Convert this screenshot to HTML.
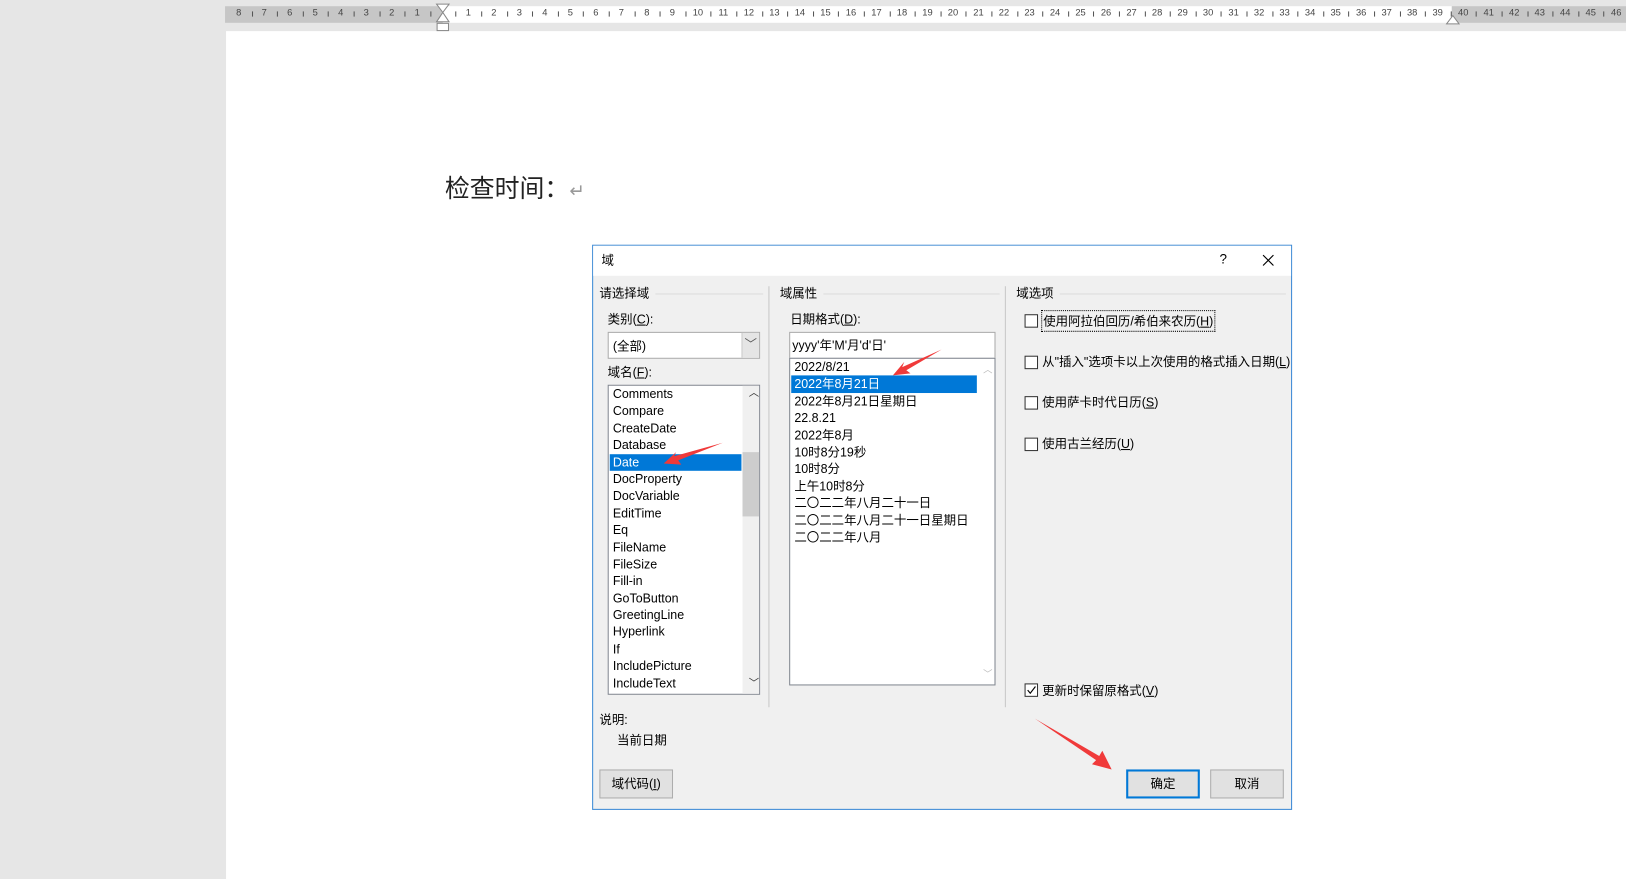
<!DOCTYPE html>
<html><head><meta charset="utf-8"><style>
*{margin:0;padding:0;box-sizing:border-box}
html,body{width:1626px;height:879px;overflow:hidden;background:#e6e6e6}
#w{position:absolute;left:0;top:0;width:1568px;height:848px;transform:scale(1.037);transform-origin:0 0;font-family:"Liberation Sans","Microsoft YaHei","Noto Sans CJK SC",sans-serif;font-size:12px;color:#000}
.a{position:absolute}
.page{left:218px;top:30px;width:1350px;height:818px;background:#fff}
.ruler{top:6px;height:16px;font-size:9px;color:#444}
.lst div{height:16.4px;line-height:16.4px;padding-left:3px;white-space:nowrap}
.sel{background:#0078d7;color:#fff}
.cb{width:13px;height:13px;border:1px solid #333;background:#fff}
.btn{height:28px;border:1px solid #adadad;background:#e1e1e1;text-align:center;line-height:26px}
.hl{height:1px;background:#dcdcdc}
u{text-decoration:underline}
</style></head><body><div id="w">
<div class="a page"></div>
<div class="a ruler" style="left:217px;width:210px;background:#c6c6c6"></div>
<div class="a ruler" style="left:427px;width:973px;background:#fff"></div>
<div class="a ruler" style="left:1400px;width:168px;background:#c6c6c6"></div>
<div id="rn"></div>
<svg class="a" style="left:420px;top:3px" width="14" height="28"><path d="M1 1h12L7 9zM7 9L1 18h12z" fill="#fff" stroke="#888"/><rect x="1.5" y="19.5" width="11" height="7" fill="#fff" stroke="#888"/></svg>
<svg class="a" style="left:1394px;top:12px" width="14" height="12"><path d="M1 11L7 3l6 8z" fill="#fff" stroke="#888"/></svg>
<div class="a" style="left:429px;top:162px;font-size:24px;color:#222;font-family:'Noto Sans CJK SC',sans-serif">检查时间：<span style="color:#999;font-size:18px">↵</span></div>

<div class="a" style="left:571px;top:236px;width:675px;height:545px;border:1px solid #3c8ad6;background:#f0f0f0">
 <div class="a" style="left:0;top:0;width:673px;height:29px;background:#fff"></div>
 <div class="a" style="left:8px;top:5px">域</div>
 <div class="a" style="left:604px;top:5px;font-size:13px">?</div>
 <svg class="a" style="left:645px;top:8px" width="12" height="12"><path d="M1 1L11 11M11 1L1 11" stroke="#000" stroke-width="1.1"/></svg>
 <div class="a" style="left:6px;top:37px">请选择域</div><div class="a hl" style="left:60px;top:46px;width:104px"></div>
 <div class="a" style="left:169px;top:39px;width:1px;height:406px;background:#c8c8c8"></div>
 <div class="a" style="left:180px;top:37px">域属性</div><div class="a hl" style="left:222px;top:46px;width:170px"></div>
 <div class="a" style="left:397px;top:39px;width:1px;height:406px;background:#c8c8c8"></div>
 <div class="a" style="left:408px;top:37px">域选项</div><div class="a hl" style="left:450px;top:46px;width:218px"></div>
 <div class="a" style="left:14px;top:62px">类别(<u>C</u>):</div>
 <div class="a" style="left:14px;top:83px;width:147px;height:26px;border:1px solid #aaa;background:#fff;padding:4px 4px">(全部)</div>
 <div class="a" style="left:143px;top:84px;width:17px;height:24px;background:#e5e5e5;border-left:1px solid #ccc;text-align:center;color:#555;line-height:22px">﹀</div>
 <div class="a" style="left:14px;top:113px">域名(<u>F</u>):</div>
 <div class="a lst" style="left:14px;top:134px;width:147px;height:299px;border:1px solid #828790;background:#fff;padding-top:0;padding-left:1px;font-size:12px">
  <div>Comments</div><div>Compare</div><div>CreateDate</div><div>Database</div><div class="sel" style="width:127px">Date</div><div>DocProperty</div><div>DocVariable</div><div>EditTime</div><div>Eq</div><div>FileName</div><div>FileSize</div><div>Fill-in</div><div>GoToButton</div><div>GreetingLine</div><div>Hyperlink</div><div>If</div><div>IncludePicture</div><div>IncludeText</div>
  <div class="a" style="left:129px;top:0;width:16px;height:297px;background:#f0f0f0"></div>
  <div class="a" style="left:129px;top:64px;width:16px;height:62px;background:#cdcdcd"></div>
  <div class="a" style="left:132px;top:0;font-size:10px;color:#333">︿</div>
  <div class="a" style="left:132px;top:280px;font-size:10px;color:#333">﹀</div>
 </div>
 <div class="a" style="left:190px;top:62px">日期格式(<u>D</u>):</div>
 <div class="a" style="left:189px;top:83px;width:199px;height:26px;border:1px solid #aaa;background:#fff;padding:3px 2px">yyyy'年'M'月'd'日'</div>
 <div class="a lst" style="left:189px;top:108px;width:199px;height:316px;border:1px solid #828790;background:#fff;padding-top:0;padding-left:1px;font-size:12px">
  <div>2022/8/21</div><div class="sel" style="width:179px">2022年8月21日</div><div>2022年8月21日星期日</div><div>22.8.21</div><div>2022年8月</div><div>10时8分19秒</div><div>10时8分</div><div>上午10时8分</div><div>二〇二二年八月二十一日</div><div>二〇二二年八月二十一日星期日</div><div>二〇二二年八月</div>
  <div class="a" style="left:183px;top:2px;font-size:9px;color:#bbb">︿</div>
  <div class="a" style="left:183px;top:296px;font-size:9px;color:#bbb">﹀</div>
 </div>
 <div class="a cb" style="left:416px;top:66px"></div><div class="a" style="left:432px;top:62px;border:1px dotted #000;padding:1px 1px">使用阿拉伯回历/希伯来农历(<u>H</u>)</div>
 <div class="a cb" style="left:416px;top:106px"></div><div class="a" style="left:433px;top:103px">从"插入"选项卡以上次使用的格式插入日期(<u>L</u>)</div>
 <div class="a cb" style="left:416px;top:145px"></div><div class="a" style="left:433px;top:142px">使用萨卡时代日历(<u>S</u>)</div>
 <div class="a cb" style="left:416px;top:185px"></div><div class="a" style="left:433px;top:182px">使用古兰经历(<u>U</u>)</div>
 <div class="a cb" style="left:416px;top:422px"></div><svg class="a" style="left:416px;top:422px" width="13" height="13"><path d="M3 6.5L5.5 9.5L10.5 3" stroke="#000" stroke-width="1.1" fill="none"/></svg><div class="a" style="left:433px;top:420px">更新时保留原格式(<u>V</u>)</div>
 <div class="a" style="left:6px;top:448px">说明:</div>
 <div class="a" style="left:23px;top:468px">当前日期</div>
 <div class="a btn" style="left:6px;top:505px;width:71px">域代码(<u>I</u>)</div>
 <div class="a btn" style="left:514px;top:505px;width:71px;border:2px solid #0078d7;line-height:24px">确定</div>
 <div class="a btn" style="left:595px;top:505px;width:71px">取消</div>
</div>
<svg class="a" style="left:0;top:0" width="1568" height="848">
 <g fill="#f03a3a">
  <path d="M697 427L650 440L652 436L640 447L657 448L654 444Z"/>
  <path d="M908 337L870 354L872 349L861 362L878 360L874 357Z"/>
  <path d="M998 693L1057 733L1053 737L1072 742L1063 724L1060 729Z"/>
 </g>
</svg>
</div>
<script>
var h='';
for(var n=-8;n<=46;n++){if(n==0)continue;var x=427+24.6*n;
h+='<div class="a" style="left:'+(x-8)+'px;top:7px;width:16px;text-align:center;font-size:9px;color:#444;font-family:Liberation Sans">'+Math.abs(n)+'</div>';}
for(var n=-8;n<46;n++){var x=427+24.6*(n+0.5);h+='<div class="a" style="left:'+x+'px;top:11px;width:1px;height:5px;background:#555"></div>';}
document.getElementById('rn').innerHTML=h;
</script>
</body></html>
